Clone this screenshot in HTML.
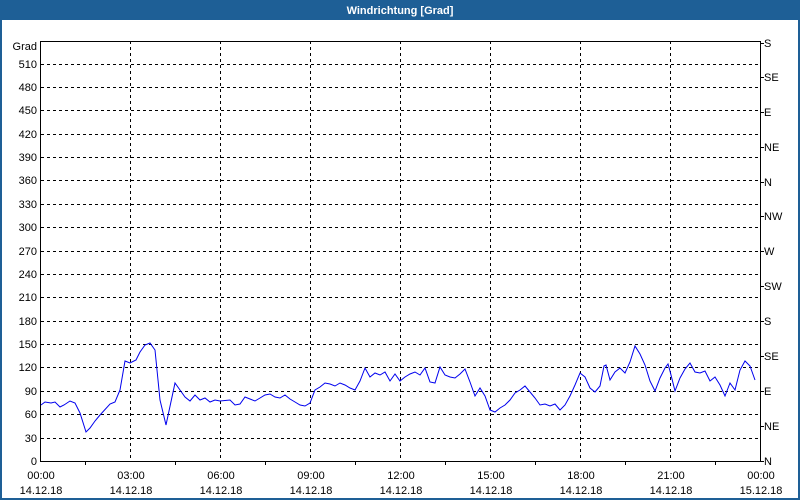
<!DOCTYPE html>
<html><head><style>
html,body{margin:0;padding:0;}
body{width:800px;height:500px;background:#fff;position:relative;overflow:hidden;font-family:"Liberation Sans",sans-serif;}
</style></head><body>
<svg width="800" height="500" xmlns="http://www.w3.org/2000/svg" style="position:absolute;left:0;top:0">
<rect x="0" y="0" width="800" height="500" fill="#1e5f96"/>
<rect x="2" y="20" width="796" height="478" fill="#fff"/>
<text x="400" y="14" fill="#fff" font-size="11" font-weight="bold" text-anchor="middle" font-family="Liberation Sans, sans-serif">Windrichtung [Grad]</text>
<g stroke="#000" stroke-width="1" stroke-dasharray="3,3" fill="none">
<path d="M41 64.5H760 M41 87.5H760 M41 110.5H760 M41 134.5H760 M41 157.5H760 M41 180.5H760 M41 204.5H760 M41 227.5H760 M41 251.5H760 M41 274.5H760 M41 297.5H760 M41 321.5H760 M41 344.5H760 M41 367.5H760 M41 391.5H760 M41 414.5H760 M41 438.5H760"/>
<path d="M130.5 41V461 M220.5 41V461 M310.5 41V461 M400.5 41V461 M490.5 41V461 M580.5 41V461 M670.5 41V461"/>
</g>
<g stroke="#000" stroke-width="1" fill="none">
<path d="M40.5 41V461.5H760.5V41 M40.5 41.5H760"/>
<path d="M85.5 461V465 M175.5 461V465 M265.5 461V465 M355.5 461V465 M445.5 461V465 M535.5 461V465 M625.5 461V465 M715.5 461V465"/>
<path d="M760 43.5H764 M760 77.5H764 M760 112.5H764 M760 147.5H764 M760 182.5H764 M760 216.5H764 M760 251.5H764 M760 286.5H764 M760 321.5H764 M760 356.5H764 M760 391.5H764 M760 426.5H764 M760 461.5H764"/>
</g>
<polyline fill="none" stroke="#0000ee" stroke-width="1" points="41,405 45,402 51,403 55,402 60,407 64,405 70,401 75,403 80,413 86,432 90,428 95,421 100,415 110,404 115,402 120,390 125,361 130,363 136,360 140,352 145,345 150,343 155,350 158,380 160,400 166,425 175,383 180,390 185,397 190,401 195,395 200,400 205,398 210,402 215,400 220,401 230,400 235,405 240,404 245,397 250,399 255,401 260,398 265,395 270,394 275,397 280,398 285,395 290,399 295,402 300,405 305,406 310,403 315,390 320,387 325,383 330,384 335,386 340,383 345,385 350,388 355,390 360,381 365,368 370,377 375,373 380,375 385,372 390,381 395,374 400,381 405,377 410,374 415,372 420,375 425,368 430,382 435,383 440,367 445,375 450,377 455,378 460,374 465,369 470,382 475,396 480,388 485,396 490,410 495,412 500,408 505,405 510,400 515,393 520,390 525,386 530,392 535,398 540,405 545,404 550,406 555,404 560,410 565,405 570,396 575,385 580,373 585,377 590,388 595,392 600,386 604,366 606,365 610,380 615,372 620,368 625,373 630,362 635,346 640,354 645,365 650,381 655,391 660,378 665,368 668,364 670,371 675,391 680,378 685,369 690,363 695,372 700,373 705,371 710,381 715,377 720,385 725,396 730,383 735,390 740,370 745,361 750,366 755,380"/>
<g font-size="11" fill="#000" font-family="Liberation Sans, sans-serif" text-anchor="end">
<text x="37" y="50">Grad</text>
<text x="37" y="68">510</text><text x="37" y="91">480</text><text x="37" y="114">450</text><text x="37" y="138">420</text><text x="37" y="161">390</text><text x="37" y="184">360</text><text x="37" y="208">330</text><text x="37" y="231">300</text><text x="37" y="255">270</text><text x="37" y="278">240</text><text x="37" y="301">210</text><text x="37" y="325">180</text><text x="37" y="348">150</text><text x="37" y="371">120</text><text x="37" y="395">90</text><text x="37" y="418">60</text><text x="37" y="442">30</text><text x="37" y="465">0</text>
</g>
<g font-size="11" fill="#000" font-family="Liberation Sans, sans-serif">
<text x="764" y="47">S</text><text x="764" y="81">SE</text><text x="764" y="116">E</text><text x="764" y="151">NE</text><text x="764" y="186">N</text><text x="764" y="220">NW</text><text x="764" y="255">W</text><text x="764" y="290">SW</text><text x="764" y="325">S</text><text x="764" y="360">SE</text><text x="764" y="395">E</text><text x="764" y="430">NE</text><text x="764" y="465">N</text>
</g>
<g font-size="11" fill="#000" font-family="Liberation Sans, sans-serif" text-anchor="middle">
<text x="41" y="479">00:00</text><text x="131" y="479">03:00</text><text x="221" y="479">06:00</text><text x="311" y="479">09:00</text><text x="401" y="479">12:00</text><text x="491" y="479">15:00</text><text x="581" y="479">18:00</text><text x="671" y="479">21:00</text><text x="761" y="479">00:00</text>
<text x="41" y="494">14.12.18</text><text x="131" y="494">14.12.18</text><text x="221" y="494">14.12.18</text><text x="311" y="494">14.12.18</text><text x="401" y="494">14.12.18</text><text x="491" y="494">14.12.18</text><text x="581" y="494">14.12.18</text><text x="671" y="494">14.12.18</text><text x="761" y="494">15.12.18</text>
</g>
</svg>
</body></html>
